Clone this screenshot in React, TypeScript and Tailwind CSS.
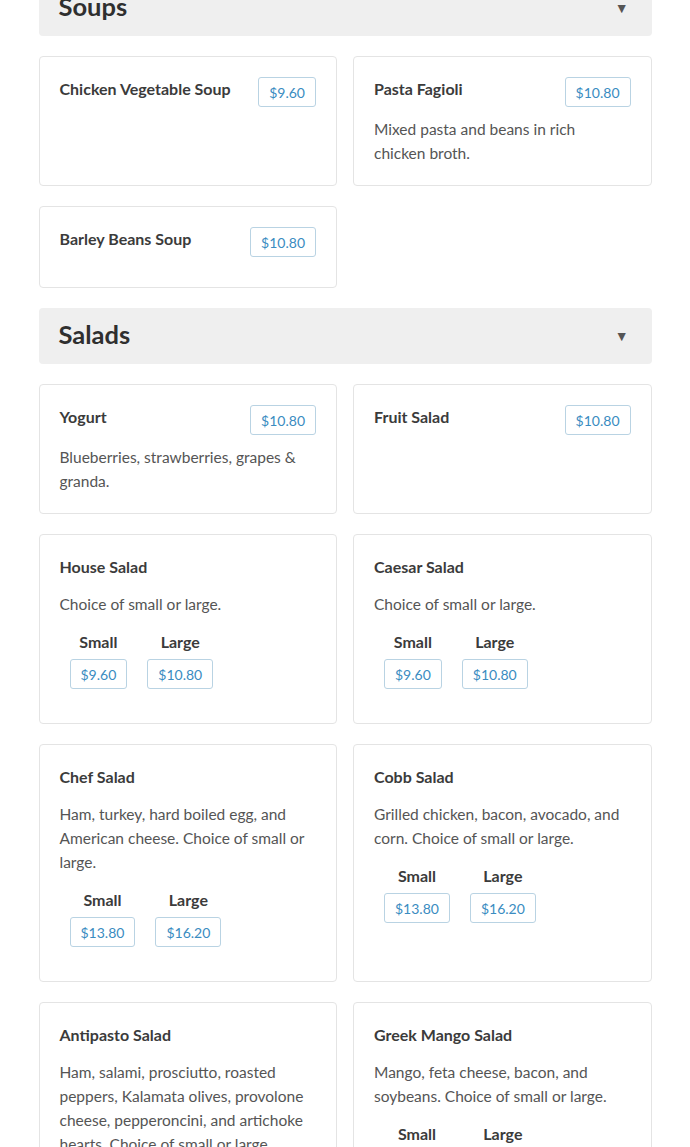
type Size = { label: string; price: string };

type MenuItem = {
  name: string;
  price?: string;
  description?: string;
  sizes?: Size[];
};

type Section = {
  title: string;
  items: MenuItem[];
};

const sections: Section[] = [
  {
    title: "Soups",
    items: [
      { name: "Chicken Vegetable Soup", price: "$9.60" },
      {
        name: "Pasta Fagioli",
        price: "$10.80",
        description: "Mixed pasta and beans in rich chicken broth.",
      },
      { name: "Barley Beans Soup", price: "$10.80" },
    ],
  },
  {
    title: "Salads",
    items: [
      {
        name: "Yogurt",
        price: "$10.80",
        description: "Blueberries, strawberries, grapes & granda.",
      },
      { name: "Fruit Salad", price: "$10.80" },
      {
        name: "House Salad",
        description: "Choice of small or large.",
        sizes: [
          { label: "Small", price: "$9.60" },
          { label: "Large", price: "$10.80" },
        ],
      },
      {
        name: "Caesar Salad",
        description: "Choice of small or large.",
        sizes: [
          { label: "Small", price: "$9.60" },
          { label: "Large", price: "$10.80" },
        ],
      },
      {
        name: "Chef Salad",
        description:
          "Ham, turkey, hard boiled egg, and American cheese. Choice of small or large.",
        sizes: [
          { label: "Small", price: "$13.80" },
          { label: "Large", price: "$16.20" },
        ],
      },
      {
        name: "Cobb Salad",
        description:
          "Grilled chicken, bacon, avocado, and corn. Choice of small or large.",
        sizes: [
          { label: "Small", price: "$13.80" },
          { label: "Large", price: "$16.20" },
        ],
      },
      {
        name: "Antipasto Salad",
        description:
          "Ham, salami, prosciutto, roasted peppers, Kalamata olives, provolone cheese, pepperoncini, and artichoke hearts. Choice of small or large.",
        sizes: [
          { label: "Small", price: "$13.80" },
          { label: "Large", price: "$16.20" },
        ],
      },
      {
        name: "Greek Mango Salad",
        description:
          "Mango, feta cheese, bacon, and soybeans. Choice of small or large.",
        sizes: [
          { label: "Small", price: "$13.80" },
          { label: "Large", price: "$16.20" },
        ],
      },
    ],
  },
];

function PriceTag({ price }: { price: string }) {
  return (
    <span className="inline-flex h-[30px] items-center rounded-[3px] border border-[#b9d3e3] px-[10px] text-[14px] text-[#3a8cc1]">
      {price}
    </span>
  );
}

function MenuCard({ item }: { item: MenuItem }) {
  return (
    <div className="rounded-[4px] border border-[#e4e4e4] bg-white p-5">
      <div
        className={
          item.price
            ? "mb-[10px] flex items-start justify-between gap-4"
            : "mb-[10px] flex min-h-[27px] items-start"
        }
      >
        <div className="text-[16px] font-bold leading-6 text-[#3b3b3b]">
          {item.name}
        </div>
        {item.price && <PriceTag price={item.price} />}
      </div>

      {item.description && (
        <p className="text-[15.5px] leading-6 text-[#555]">{item.description}</p>
      )}

      {item.sizes && (
        <div className="mt-[14px] mb-[14px] ml-[10px] flex gap-5">
          {item.sizes.map((size) => (
            <div key={size.label} className="flex flex-col items-center">
              <div className="mb-[5px] text-[16px] font-bold leading-6 text-[#3b3b3b]">
                {size.label}
              </div>
              <PriceTag price={size.price} />
            </div>
          ))}
        </div>
      )}
    </div>
  );
}

export default function App() {
  return (
    <main
      className="min-h-screen bg-white"
      style={{ fontFamily: "Lato, 'Open Sans', sans-serif" }}
    >
      <div className="mx-auto -mt-5 w-[613px] pb-10">
        {sections.map((section) => (
          <section key={section.title} className="mb-5">
            <div className="mb-5 flex h-14 items-center justify-between rounded-[4px] bg-[#efefef] pl-5 pr-[23px]">
              <h2 className="-mt-[3px] text-[25.5px] font-bold text-[#2f2f2f]">
                {section.title}
              </h2>
              <span className="text-[14px] leading-none text-[#555]">▼</span>
            </div>

            <div className="grid grid-cols-2 gap-x-4 gap-y-5">
              {section.items.map((item) => (
                <MenuCard key={item.name} item={item} />
              ))}
            </div>
          </section>
        ))}
      </div>
    </main>
  );
}
